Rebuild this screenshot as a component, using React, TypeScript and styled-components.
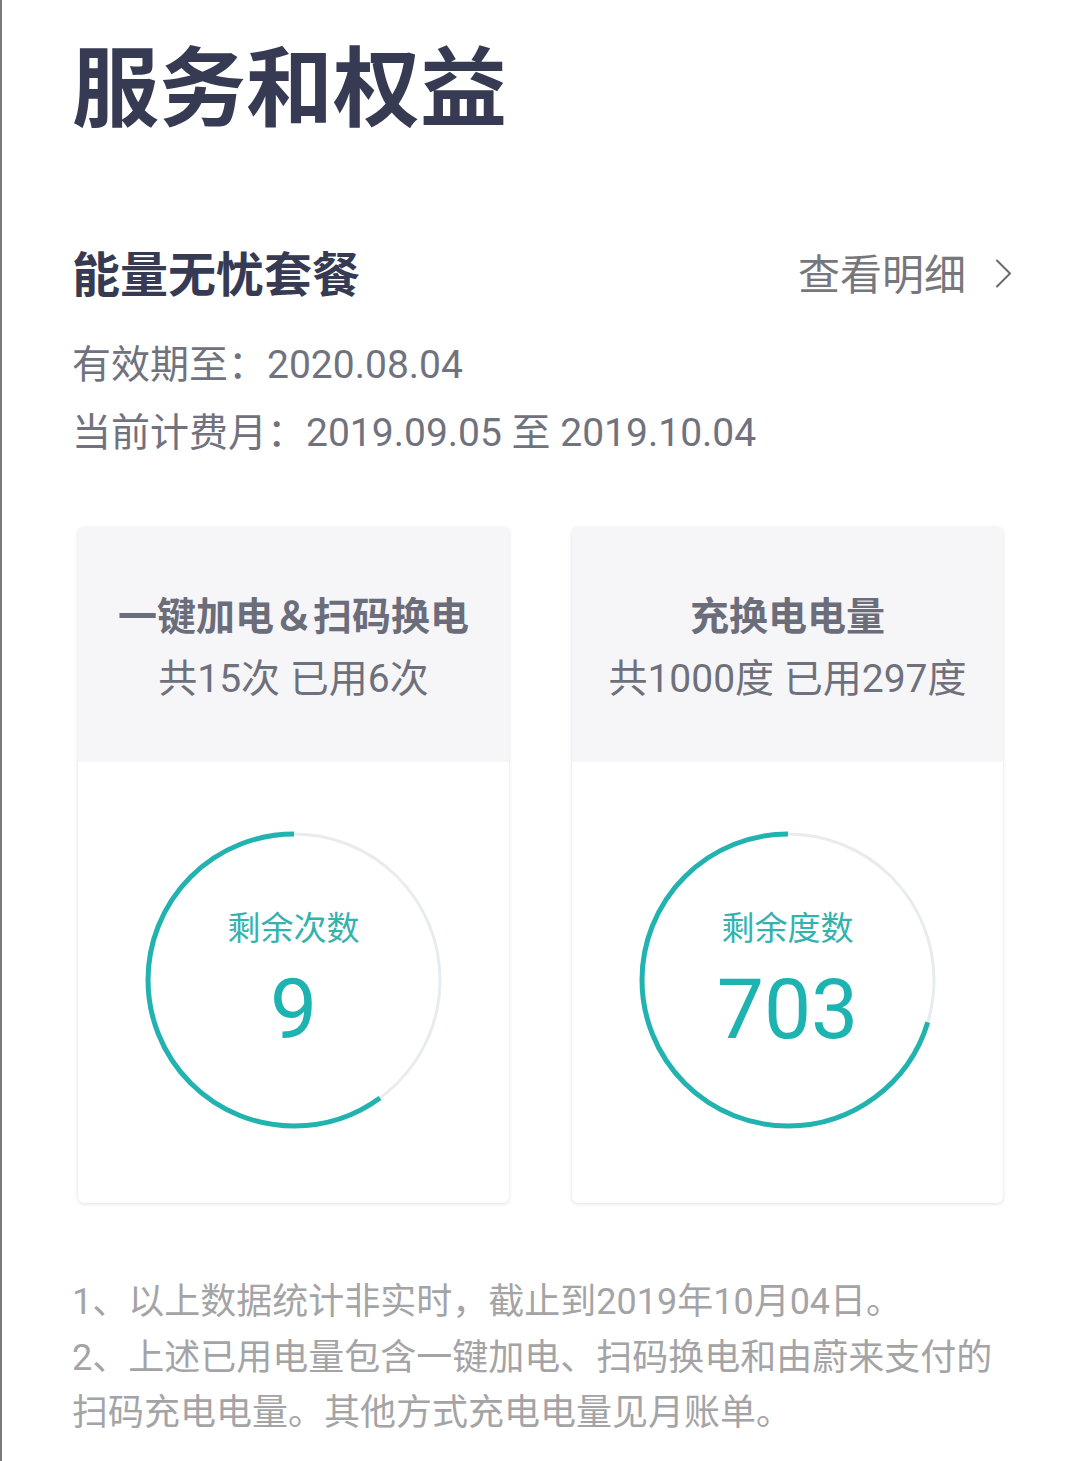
import React from "react";
import styled, { createGlobalStyle } from "styled-components";

const GlobalStyle = createGlobalStyle`
  html, body {
    margin: 0;
    padding: 0;
    background: #ffffff;
  }
  body {
    font-family: Roboto, "Noto Sans CJK SC", "Noto Sans", sans-serif;
    -webkit-font-smoothing: antialiased;
  }
  * { box-sizing: border-box; }
`;

const Page = styled.div`
  width: 1080px;
  min-height: 1461px;
  border-left: 2px solid #7a7a7a;
  padding: 40px 66px 20px 70px;
  background: #ffffff;
`;

const Title = styled.h1`
  margin: 0;
  font-size: 87px;
  line-height: 100px;
  font-weight: 700;
  color: #363a52;
`;

const SectionRow = styled.div`
  margin-top: 106px;
  display: flex;
  align-items: center;
  justify-content: space-between;
  height: 60px;
`;

const SectionTitle = styled.h2`
  margin: 0;
  font-size: 48px;
  line-height: 60px;
  font-weight: 700;
  color: #363a52;
`;

const DetailLink = styled.a`
  display: flex;
  align-items: center;
  gap: 29px;
  font-size: 42px;
  line-height: 60px;
  color: #77777b;
  text-decoration: none;
`;

const Chevron = styled.svg`
  width: 17px;
  height: 29px;
  margin-top: -6px;
  margin-right: 2px;
`;

const InfoList = styled.div`
  margin-top: 25px;
  display: flex;
  flex-direction: column;
`;

const InfoLine = styled.div`
  font-size: 39px;
  line-height: 68px;
  color: #70727e;
  white-space: nowrap;
`;

const Cards = styled.div`
  margin: 60px 11px 0 6px;
  display: grid;
  grid-template-columns: 1fr 1fr;
  gap: 63px;
`;

const Card = styled.div`
  border-radius: 6px;
  overflow: hidden;
  background: #ffffff;
  box-shadow: 0 1px 4px rgba(0, 0, 0, 0.12), 0 0 1px rgba(0, 0, 0, 0.06);
  display: flex;
  flex-direction: column;
`;

const CardHeader = styled.div`
  background: #f6f6f8;
  height: 235px;
  padding: 59px 0 52px;
  display: flex;
  flex-direction: column;
  align-items: center;
`;

const CardTitle = styled.div`
  font-size: 39px;
  line-height: 62px;
  font-weight: 700;
  color: #6b6d7a;
  white-space: nowrap;
`;

const CardSub = styled.div`
  font-size: 39px;
  line-height: 62px;
  color: #6e707c;
  white-space: nowrap;
`;

const CardBody = styled.div`
  height: 441px;
  padding-top: 68px;
  display: flex;
  justify-content: center;
`;

const RingWrap = styled.div`
  width: 300px;
  height: 300px;
  display: grid;
  place-items: center;
  & > * {
    grid-area: 1 / 1;
  }
`;

const RingText = styled.div`
  display: flex;
  flex-direction: column;
  align-items: center;
  margin-top: 0px;
`;

const RingLabel = styled.div`
  font-size: 33px;
  line-height: 40px;
  color: #33b2ae;
  white-space: nowrap;
`;

const RingValue = styled.div`
  margin-top: 19px;
  font-size: 84px;
  line-height: 84px;
  color: #1db3b0;
  font-weight: 400;
`;

const Footer = styled.div`
  margin-top: 72px;
  font-size: 36px;
  line-height: 55.5px;
  color: #a4a4a6;
`;

const FootLine = styled.p`
  margin: 0;
`;

type RingProps = { label: string; value: string; ratio: number };

const Ring: React.FC<RingProps> = ({ label, value, ratio }) => {
  const size = 300;
  const r = 146;
  const c = 2 * Math.PI * r;
  const dash = c * ratio;
  return (
    <RingWrap>
      <svg width={size} height={size} viewBox={`0 0 ${size} ${size}`}>
        <circle cx={150} cy={150} r={r} fill="none" stroke="#e8ecee" strokeWidth={3} />
        <circle
          cx={150}
          cy={150}
          r={r}
          fill="none"
          stroke="#22b2b0"
          strokeWidth={5}
          strokeDasharray={`${dash} ${c}`}
          transform="translate(300 0) scale(-1 1) rotate(-90 150 150)"
        />
      </svg>
      <RingText>
        <RingLabel>{label}</RingLabel>
        <RingValue>{value}</RingValue>
      </RingText>
    </RingWrap>
  );
};

type CardData = { title: string; sub: string; label: string; value: string; ratio: number };

const cards: CardData[] = [
  { title: "一键加电＆扫码换电", sub: "共15次 已用6次", label: "剩余次数", value: "9", ratio: 9 / 15 },
  { title: "充换电电量", sub: "共1000度 已用297度", label: "剩余度数", value: "703", ratio: 703 / 1000 },
];

export default function App() {
  return (
    <>
      <GlobalStyle />
      <Page>
        <Title>服务和权益</Title>
        <SectionRow>
          <SectionTitle>能量无忧套餐</SectionTitle>
          <DetailLink href="#">
            查看明细
            <Chevron viewBox="0 0 17 29">
              <path d="M2 1.5 L15 14.5 L2 27.5" fill="none" stroke="#6a6a6e" strokeWidth={2} strokeLinecap="round" strokeLinejoin="round" />
            </Chevron>
          </DetailLink>
        </SectionRow>
        <InfoList>
          <InfoLine>有效期至：2020.08.04</InfoLine>
          <InfoLine>当前计费月：2019.09.05 至 2019.10.04</InfoLine>
        </InfoList>
        <Cards>
          {cards.map((c) => (
            <Card key={c.title}>
              <CardHeader>
                <CardTitle>{c.title}</CardTitle>
                <CardSub>{c.sub}</CardSub>
              </CardHeader>
              <CardBody>
                <Ring label={c.label} value={c.value} ratio={c.ratio} />
              </CardBody>
            </Card>
          ))}
        </Cards>
        <Footer>
          <FootLine>1、以上数据统计非实时，截止到2019年10月04日。</FootLine>
          <FootLine>2、上述已用电量包含一键加电、扫码换电和由蔚来支付的扫码充电电量。其他方式充电电量见月账单。</FootLine>
        </Footer>
      </Page>
    </>
  );
}
